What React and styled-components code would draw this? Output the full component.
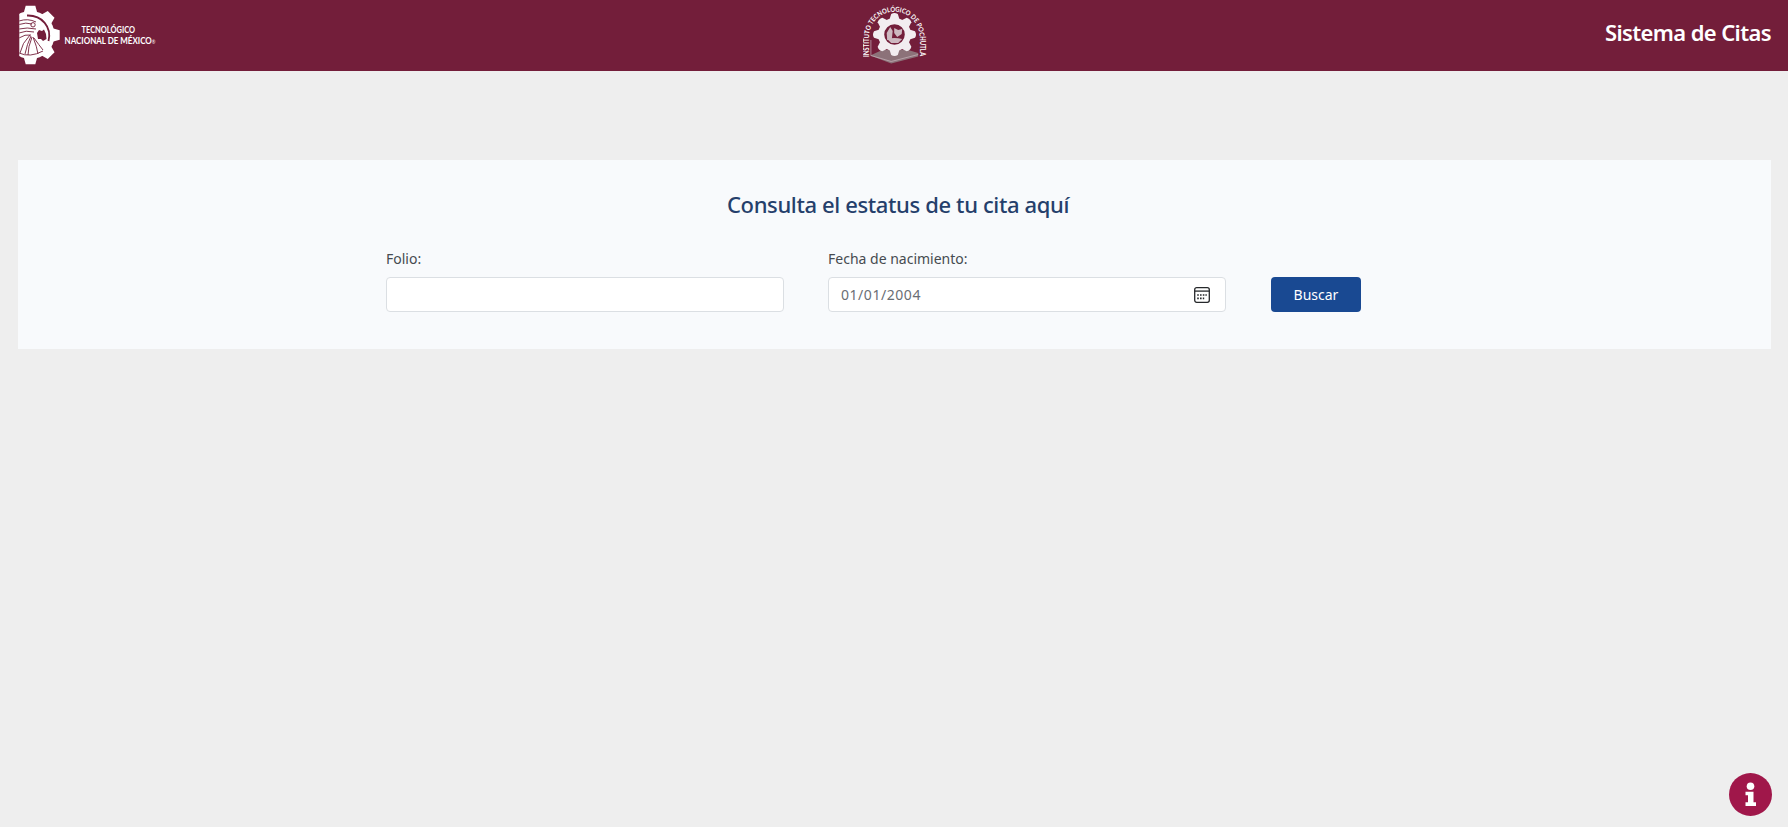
import React from "react";
import styled, { createGlobalStyle } from "styled-components";

const GlobalStyle = createGlobalStyle`
  * { box-sizing: border-box; }
  body { margin: 0; background: #eeeeee; font-family: "Noto Sans", "Open Sans", sans-serif; color: #464b50; }
`;

const Header = styled.header`
  height: 71px;
  padding: 0 17px 0 18px;
  display: grid;
  grid-template-columns: 1fr auto 1fr;
  align-items: center;
  background: #731e3a;
`;

const Brand = styled.div`
  display: flex;
  align-items: center;
`;

const SystemName = styled.h1`
  margin: 0;
  padding-bottom: 7px;
  justify-self: end;
  color: #fff;
  font-size: 22px;
  font-weight: 600;
  line-height: 30px;
  letter-spacing: -0.62px;
  white-space: nowrap;
`;

const Panel = styled.main`
  margin: 89px 17px 0 18px;
  height: 189px;
  padding-top: 29px;
  display: flex;
  flex-direction: column;
  align-items: center;
  background: #f8fafc;
`;

const Title = styled.h2`
  margin: 0 0 0 7px;
  color: #253f6b;
  font-size: 22px;
  font-weight: 500;
  line-height: 30px;
  letter-spacing: -0.37px;
  white-space: nowrap;
`;

const Form = styled.form`
  width: 975px;
  margin: 29px 0 0 -42px;
  display: flex;
  align-items: flex-end;
  gap: 44px;
`;

const Field = styled.label`
  width: 398px;
  flex: none;
  display: flex;
  flex-direction: column;
  gap: 7px;
  font-size: 14px;
  line-height: 22px;
`;

const Control = styled.div`
  height: 35px;
  padding: 0 15px 0 12px;
  display: flex;
  align-items: center;
  justify-content: space-between;
  border: 1px solid #dbdfe3;
  border-radius: 4px;
  background: #fff;
  color: #696e74;
`;

const DateValue = styled.span`
  letter-spacing: 0.55px;
`;

const SearchButton = styled.button`
  width: 90px;
  height: 35px;
  margin-left: 1px;
  padding: 0;
  flex: none;
  border: 0;
  border-radius: 4px;
  background: #194992;
  color: #fff;
  font: 14px/22px "Noto Sans", sans-serif;
`;

const InfoButton = styled.button`
  position: fixed;
  right: 16px;
  bottom: 11px;
  width: 43px;
  height: 43px;
  padding: 0;
  border: 0;
  border-radius: 50%;
  background: #a0174a;
  svg { display: block; }
`;

const toothAngles = Array.from({ length: 8 }, (_, i) => i * 45);

function TecnmLogo() {
  return (
    <svg width="150" height="71" viewBox="18 0 150 71" aria-label="Tecnológico Nacional de México">
      <clipPath id="half"><rect x="19.3" y="0" width="45" height="71" /></clipPath>
      <g clipPath="url(#half)">
        <g fill="#fff">
          <circle cx="30.5" cy="35" r="24" />
          {toothAngles.map((a) => (
            <path key={a} d="M23.7 13 L25.7 5.8 H35.3 L37.3 13Z" transform={`rotate(${a} 30.5 35)`} />
          ))}
        </g>
        <g fill="none" stroke="#731e3a" strokeWidth=".9">
          <path d="M27 15.5 C42 15 52 27 48.5 41" strokeWidth="1.8" />
          <path d="M19 21 Q28 18 36 22 M19 24.5 Q26 22 32 24 M19 29 Q27 27 36 29 M19 33 Q26 30 34 32 M19 38 Q25 34 31 35" />
          <circle cx="33" cy="24.8" r="2.2" />
          <path d="M30 35 Q22 43 20 53 M31 36 Q27 44 25 54 M32 37 Q28 47 28 55 M33 37 Q37 47 38 54 M34 38 Q39 45 43 50 M19 53 Q30 58 43 51" />
        </g>
        <path fill="#731e3a" d="M37 33 L39 30 L42 31 L44 29.5 L46 34 L46.5 39 L43 41 L41 39 L38 39Z" />
      </g>
      <g fill="#fff" fontFamily="Lato, sans-serif" fontWeight="700" fontSize="8.7">
        <text x="81.5" y="33" textLength="53.5" lengthAdjust="spacingAndGlyphs">TECNOLÓGICO</text>
        <text x="64.5" y="44.2" textLength="91" lengthAdjust="spacingAndGlyphs">
          NACIONAL DE MÉXICO<tspan fontSize="4.8" fontWeight="400">®</tspan>
        </text>
      </g>
    </svg>
  );
}

function CampusLogo() {
  return (
    <svg width="64" height="71" viewBox="862.8 0 64 71" aria-label="Instituto Tecnológico de Pochutla">
      <path d="M870 55.5 L882 50 H908 L918 53 V56.5 L891 63.5Z" fill="#8c7279" />
      <path d="M870.7 40 V55.5 L891 61.5 L918 54.5" fill="none" stroke="#c7b4bb" strokeWidth=".7" />
      <g fill="#f2edf0">
        <path fillRule="evenodd" d="M877.8 34.5 a16.5 16.5 0 1 0 33 0 a16.5 16.5 0 1 0 -33 0 M884 34.5 a10.3 10.3 0 1 0 20.6 0 a10.3 10.3 0 1 0 -20.6 0" />
        {toothAngles.map((a) => (
          <path key={a} d="M889.3 19.5 L891 14 Q894.3 12 897.6 14 L899.3 19.5Z" transform={`rotate(${a} 894.3 34.5)`} />
        ))}
      </g>
      <g fill="#cdb8c0">
        <path d="M887 40 L886.5 33 L890 27 L892.5 31 L891.5 40Z M894 28 L898 30 L902 29 L901.5 34 L897 37 L894 33Z" />
        <path d="M887 39 Q894 37 902 39 L898 43 H891Z" />
      </g>
      <path id="arch" d="M868.8 57 V37 A25.3 25.3 0 0 1 919.4 37 V57" fill="none" />
      <text fill="#fff" fontFamily="Lato, sans-serif" fontWeight="700" fontSize="6.8">
        <textPath href="#arch" textLength="118" lengthAdjust="spacingAndGlyphs">INSTITUTO TECNOLÓGICO DE POCHUTLA</textPath>
      </text>
    </svg>
  );
}

function CalendarIcon() {
  return (
    <svg width="16" height="16" viewBox="0 0 16 16" fill="none" stroke="#26282b" strokeWidth="1.3">
      <rect x=".7" y=".7" width="14.6" height="14.6" rx="2" />
      <path d="M.7 4.1 H15.3" />
      <path d="M3.2 8 H4.8 M6 8 H7.6 M8.8 8 H10.4 M11.4 8 H12.8 M3.2 11.3 H4.8 M6 11.3 H7.6 M8.8 11.3 H10.2" strokeWidth="1.7" />
    </svg>
  );
}

export default function App() {
  return (
    <>
      <GlobalStyle />
      <Header>
        <Brand><TecnmLogo /></Brand>
        <CampusLogo />
        <SystemName>Sistema de Citas</SystemName>
      </Header>
      <Panel>
        <Title>Consulta el estatus de tu cita aquí</Title>
        <Form>
          <Field>
            <span>Folio:</span>
            <Control />
          </Field>
          <Field>
            <span>Fecha de nacimiento:</span>
            <Control><DateValue>01/01/2004</DateValue><CalendarIcon /></Control>
          </Field>
          <SearchButton type="button">Buscar</SearchButton>
        </Form>
      </Panel>
      <InfoButton aria-label="Información">
        <svg width="43" height="43" viewBox="0 0 43 43" fill="#fff">
          <circle cx="21.5" cy="13.3" r="3.8" />
          <path d="M16.5 18.7 H24.5 V29.3 H27 V33 H16.5 V29.3 H19 V22.3 H16.5Z" />
        </svg>
      </InfoButton>
    </>
  );
}
